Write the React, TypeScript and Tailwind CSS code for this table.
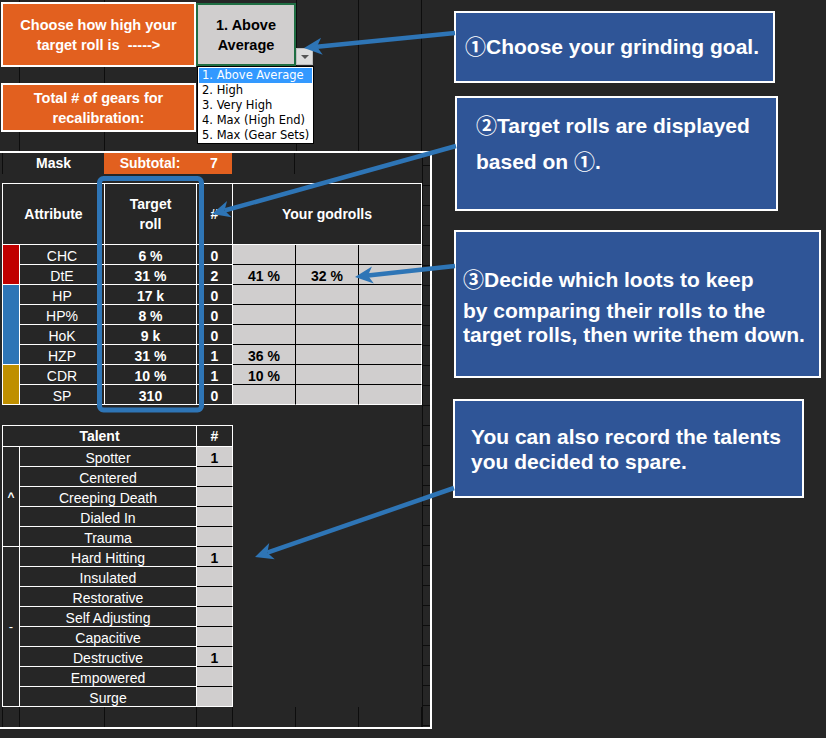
import { Fragment } from "react";
import clsx from "clsx";

const ATTRS = [
  { name: "CHC", target: "6 %", count: "0", rolls: [] as string[] },
  { name: "DtE", target: "31 %", count: "2", rolls: ["41 %", "32 %"] },
  { name: "HP", target: "17 k", count: "0", rolls: [] },
  { name: "HP%", target: "8 %", count: "0", rolls: [] },
  { name: "HoK", target: "9 k", count: "0", rolls: [] },
  { name: "HZP", target: "31 %", count: "1", rolls: ["36 %"] },
  { name: "CDR", target: "10 %", count: "1", rolls: ["10 %"] },
  { name: "SP", target: "310", count: "0", rolls: [] },
];

const TALENTS = [
  { name: "Spotter", count: "1" },
  { name: "Centered", count: "" },
  { name: "Creeping Death", count: "" },
  { name: "Dialed In", count: "" },
  { name: "Trauma", count: "" },
  { name: "Hard Hitting", count: "1" },
  { name: "Insulated", count: "" },
  { name: "Restorative", count: "" },
  { name: "Self Adjusting", count: "" },
  { name: "Capacitive", count: "" },
  { name: "Destructive", count: "1" },
  { name: "Empowered", count: "" },
  { name: "Surge", count: "" },
];

const OPTIONS = ["1. Above Average", "2. High", "3. Very High", "4. Max (High End)", "5. Max (Gear Sets)"];

const GRID_COLS = [17, 85, 92, 36, 63, 63, 63];

function Arrow({ x1, y1, x2, y2 }: { x1: number; y1: number; x2: number; y2: number }) {
  const len = Math.hypot(x2 - x1, y2 - y1);
  const ux = (x2 - x1) / len;
  const uy = (y2 - y1) / len;
  const hl = 18;
  const hw = 8.5;
  const bx = x2 - ux * hl;
  const by = y2 - uy * hl;
  const nx = x2 - ux * (hl - 5);
  const ny = y2 - uy * (hl - 5);
  const px = -uy;
  const py = ux;
  const pts = [
    [x2, y2],
    [bx + px * hw, by + py * hw],
    [nx, ny],
    [bx - px * hw, by - py * hw],
  ]
    .map((p) => p.join(","))
    .join(" ");
  return (
    <g>
      <line x1={x1} y1={y1} x2={nx} y2={ny} stroke="#2e75b6" strokeWidth={4.5} />
      <polygon points={pts} fill="#2e75b6" />
    </g>
  );
}

// header cells
const cell = "flex items-center justify-center border-b border-r";
// 20px body rows: text sits a little low, like a spreadsheet cell
const rowCell = "flex items-center justify-center border-b border-r pt-[3px]";

export default function App() {
  return (
    <div className="relative flex h-[738px] w-[826px] overflow-hidden bg-[#262626] font-['Liberation_Sans','Noto_Sans_CJK_JP',sans-serif] text-[14px] text-white">
      {/* spreadsheet */}
      <div className="w-[440px] shrink-0">
        <div className="relative h-[151px] bg-[linear-gradient(to_right,transparent_19px,#0d0d0d_19px,#0d0d0d_20px,transparent_20px,transparent_104px,#0d0d0d_104px,#0d0d0d_105px,transparent_105px,transparent_296px,#0d0d0d_296px,#0d0d0d_297px,transparent_297px,transparent_358px,#0d0d0d_358px,#0d0d0d_359px,transparent_359px,transparent_421px,#0d0d0d_421px,#0d0d0d_422px,transparent_422px)]">
          <div className="flex pl-[1px] pt-[2px]">
            <div className="flex h-[65px] w-[195px] flex-col items-center justify-center border-2 border-white bg-[#e2601f] text-[14.5px] font-bold leading-[20px]">
              <span>Choose how high your</span>
              <span className="whitespace-pre">target roll is  -----&gt;</span>
            </div>
            <div className="mt-[1px] flex h-[63px] w-[100px] flex-col items-center justify-center border-2 border-[#1f6e43] bg-[#d0cece] text-[14.5px] font-bold leading-[20px] text-black">
              <span>1. Above</span>
              <span>Average</span>
            </div>
            <div className="mt-[46px] flex h-[17px] w-[17px] items-center justify-center border border-[#bdbdbd] bg-[#dcdcdc]">
              <div className="h-0 w-0 border-x-[4px] border-t-[4px] border-x-transparent border-t-[#555]" />
            </div>
          </div>
          <div className="ml-[1px] mt-[16px] flex h-[49px] w-[195px] flex-col items-center justify-center border-2 border-white bg-[#e2601f] text-[14.5px] font-bold leading-[20px]">
            <span>Total # of gears for</span>
            <span>recalibration:</span>
          </div>

          {/* open validation list */}
          <div className="absolute left-[197px] top-[66px] z-10 h-[78px] w-[117px] border border-black bg-white p-px font-['DejaVu_Sans',sans-serif] text-[11.5px] text-black">
            {OPTIONS.map((o, i) => (
              <div
                key={o}
                className={clsx("h-[15px] whitespace-nowrap pl-[3px] leading-[15px]", i === 0 && "bg-[#3399ff] text-white")}
              >
                {o}
              </div>
            ))}
          </div>
        </div>

        {/* framed area */}
        <div className="flex w-[432px] border-y-2 border-r-2 border-white">
          <div className="w-[422px] shrink-0">
            <div className="ml-[2px] flex h-[21px] border-l border-[#0d0d0d] font-bold">
              <div className="flex w-[101px] items-center justify-center">Mask</div>
              <div className="flex w-[128px] bg-[#e2601f]">
                <div className="flex w-[92px] items-center justify-center">Subtotal:</div>
                <div className="flex w-[36px] items-center justify-center">7</div>
              </div>
              <div className="ml-[62px] w-px bg-[#0d0d0d]" />
            </div>
            <div className="h-[9px]" />

            {/* attributes */}
            <div className="ml-[2px] grid w-[420px] grid-cols-[17px_85px_92px_36px_63px_63px_63px] grid-rows-[61px_repeat(8,20px)] border-l border-t border-white">
              <div className={clsx(cell, "col-span-2 border-white font-bold")}>Attribute</div>
              <div className={clsx(cell, "flex-col border-white font-bold leading-[20px]")}>
                <span>Target</span>
                <span>roll</span>
              </div>
              <div className={clsx(cell, "border-white font-bold")}>#</div>
              <div className={clsx(cell, "col-span-3 border-white font-bold")}>Your godrolls</div>
              {ATTRS.map((a, i) => (
                <Fragment key={a.name}>
                  {i === 0 && <div className="col-start-1 row-span-2 border-b border-r border-white bg-[#c00000]" />}
                  {i === 2 && <div className="col-start-1 row-span-4 border-b border-r border-white bg-[#2e75b6]" />}
                  {i === 6 && <div className="col-start-1 row-span-2 border-b border-r border-white bg-[#bf8f00]" />}
                  <div className={clsx(rowCell, "border-white")}>{a.name}</div>
                  <div className={clsx(rowCell, "border-white font-bold")}>{a.target}</div>
                  <div className={clsx(rowCell, "border-white font-bold")}>{a.count}</div>
                  {[0, 1, 2].map((j) => (
                    <div
                      key={j}
                      className={clsx(
                        rowCell,
                        "bg-[#d0cece] font-bold text-black",
                        j < 2 ? "border-r-black" : "border-r-white",
                        i < 7 ? "border-b-black" : "border-b-white",
                      )}
                    >
                      {a.rolls[j] ?? ""}
                    </div>
                  ))}
                </Fragment>
              ))}
            </div>
            <div className="h-[20px]" />

            {/* talents */}
            <div className="ml-[2px] grid w-[231px] grid-cols-[17px_177px_36px] grid-rows-[21px_repeat(13,20px)] border-l border-t border-white">
              <div className={clsx(cell, "col-span-2 border-white font-bold")}>Talent</div>
              <div className={clsx(cell, "border-white font-bold")}>#</div>
              {TALENTS.map((t, i) => (
                <Fragment key={t.name}>
                  {i === 0 && (
                    <div className="col-start-1 row-span-5 flex items-center justify-center border-b border-r border-white text-[12px] font-bold">
                      ^
                    </div>
                  )}
                  {i === 5 && (
                    <div className="col-start-1 row-span-8 flex items-center justify-center border-b border-r border-white text-[13px]">
                      -
                    </div>
                  )}
                  <div className={clsx(rowCell, "border-white")}>{t.name}</div>
                  <div
                    className={clsx(
                      rowCell,
                      "border-r-white bg-[#d0cece] font-bold text-black",
                      i < 12 ? "border-b-black" : "border-b-white",
                    )}
                  >
                    {t.count}
                  </div>
                </Fragment>
              ))}
            </div>

            <div className="ml-[2px] flex h-[20px] border-l border-[#0d0d0d]">
              {GRID_COLS.map((w, i) => (
                <div key={i} style={{ width: w }} className="border-r border-[#0d0d0d]" />
              ))}
            </div>
          </div>
          <div className="flex-1 border-l border-[#0d0d0d] bg-[repeating-linear-gradient(to_bottom,transparent_0px,transparent_12px,#0d0d0d_12px,#0d0d0d_13px,transparent_13px,transparent_20px)]" />
        </div>
      </div>

      {/* notes */}
      <div className="flex flex-col text-[21px] font-bold">
        <div className="ml-[14px] mt-[11px] flex h-[72px] w-[321px] items-center border-2 border-white bg-[#2f5597] pl-[9px]">
          ①Choose your grinding goal.
        </div>
        <div className="ml-[15px] mt-[13px] h-[115px] w-[323px] border-2 border-white bg-[#2f5597] pl-[19px] pt-[10px] leading-[36px]">
          <div>②Target rolls are displayed</div>
          <div>based on ①.</div>
        </div>
        <div className="ml-[14px] mt-[19px] h-[148px] w-[367px] border-2 border-white bg-[#2f5597] pl-[7px] pt-[36px] leading-[24px]">
          <div className="mb-[7px]">③Decide which loots to keep</div>
          <div>by comparing their rolls to the</div>
          <div>target rolls, then write them down.</div>
        </div>
        <div className="ml-[13px] mt-[21px] h-[99px] w-[351px] border-2 border-white bg-[#2f5597] pl-[16px] pt-[23px] leading-[25px]">
          <div>You can also record the talents</div>
          <div>you decided to spare.</div>
        </div>
      </div>

      {/* callout shapes */}
      <svg className="pointer-events-none absolute left-0 top-0 z-20" width={826} height={738}>
        <rect x={99.5} y={178.5} width={102} height={231.5} rx={4} fill="none" stroke="#2e75b6" strokeWidth={5} />
        <Arrow x1={455} y1={33} x2={304} y2={48} />
        <Arrow x1={456} y1={146} x2={212} y2={214} />
        <Arrow x1={455} y1={266} x2={355} y2={277} />
        <Arrow x1={454} y1={488} x2={255} y2={557} />
      </svg>
    </div>
  );
}
